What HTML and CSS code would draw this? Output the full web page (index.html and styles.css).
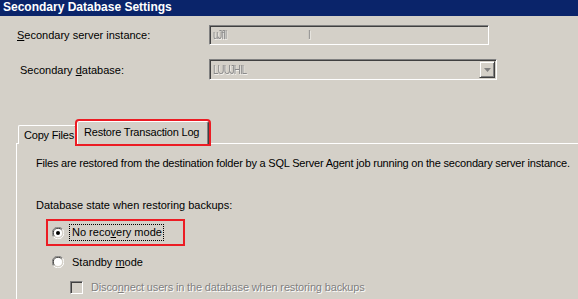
FILE: index.html
```html
<!DOCTYPE html>
<html>
<head>
<meta charset="utf-8">
<link rel="stylesheet" href="styles.css">
</head>
<body>
<div class="title">Secondary Database Settings</div>
<div class="form">
  <div class="field field-first">
    <div class="label label-1"><u>S</u>econdary server instance:</div>
    <div class="textbox box-1"><span class="redacted">uJflI</span><span class="redacted gap">I</span></div>
  </div>
  <div class="field field-second">
    <div class="label label-2">Secondary <u>d</u>atabase:</div>
    <div class="textbox box-2">
      <span class="redacted">LUUJHIL</span>
      <span class="drop">
        <svg width="7" height="4" viewBox="0 0 7 4"><path d="M0 0h7L3.5 4z" fill="#808080"/></svg>
      </span>
    </div>
  </div>
</div>
<div class="tabs">
  <div class="tab">Copy Files</div>
  <div class="tab tab-active">Restore Transaction Log</div>
</div>
<div class="panel">
  <div class="desc">Files are restored from the destination folder by a SQL Server Agent job running on the secondary server instance.</div>
  <div class="group-label">Database state when restoring backups:</div>
  <div class="highlight">
    <div class="option">
      <svg class="radio" width="12" height="12" viewBox="0 0 12 12">
        <path d="M10.5 2.2A5.5 5.5 0 0 0 1.5 9.8" fill="none" stroke="#808080" stroke-width="1"/>
        <path d="M9.6 2.9A4.5 4.5 0 0 0 2.4 9.1" fill="none" stroke="#404040" stroke-width="1"/>
        <circle cx="6" cy="6" r="4" fill="#fff"/>
        <path d="M1.5 9.8A5.5 5.5 0 0 0 10.5 2.2" fill="none" stroke="#fff" stroke-width="1"/>
        <circle cx="6" cy="6" r="2" fill="#000"/>
      </svg>
      <span class="focus">No reco<u>v</u>ery mode</span>
    </div>
  </div>
  <div class="option option-standby">
    <svg class="radio" width="12" height="12" viewBox="0 0 12 12">
      <path d="M10.5 2.2A5.5 5.5 0 0 0 1.5 9.8" fill="none" stroke="#808080" stroke-width="1"/>
      <path d="M9.6 2.9A4.5 4.5 0 0 0 2.4 9.1" fill="none" stroke="#404040" stroke-width="1"/>
      <circle cx="6" cy="6" r="4" fill="#fff"/>
      <path d="M1.5 9.8A5.5 5.5 0 0 0 10.5 2.2" fill="none" stroke="#fff" stroke-width="1"/>
    </svg>
    <span class="opt-text">Standby <u>m</u>ode</span>
  </div>
  <div class="option option-check">
    <span class="checkbox"></span>
    <span class="disabled-text">Disco<u>n</u>nect users in the database when restoring backups</span>
  </div>
</div>
</body>
</html>
```
FILE: styles.css
```css
html, body {
  margin: 0;
  padding: 0;
}
body {
  width: 578px;
  height: 299px;
  overflow: hidden;
  background: #d4d0c8;
  font-family: "Liberation Sans", Arial, sans-serif;
  font-size: 11px;
  color: #000;
}
u { text-decoration: underline; text-underline-offset: 1px; }

.title {
  height: 16px;
  line-height: 15px;
  background: #0a246a;
  color: #fff;
  font-weight: bold;
  font-size: 12px;
  padding-left: 3px;
}

.form {
  padding-top: 9px;
}
.field {
  display: flex;
  align-items: center;
}
.field-first { height: 20px; }
.field-second { height: 21px; margin-top: 14px; }
.label { width: 192px; }
.label-1 { margin-left: 17px; }
.label-2 { margin-left: 20px; width: 189px; }

.textbox {
  box-sizing: border-box;
  height: 100%;
  border-style: solid;
  border-width: 1px;
  border-color: #808080 #fff #fff #808080;
  box-shadow: inset 1px 1px 0 #404040, inset -1px -1px 0 #d4d0c8;
  display: flex;
  align-items: center;
  padding-left: 3px;
  position: relative;
}
.box-1 { width: 280px; }
.box-2 { width: 288px; }
.redacted {
  color: #8a8a8a;
  font-size: 12px;
  letter-spacing: -1px;
  transform: scaleX(0.8);
  transform-origin: left center;
  text-shadow: 1px 1px 0 #f4f2ee;
}
.gap { margin-left: 78px; }
.drop {
  position: absolute;
  right: 1px;
  top: 1px;
  width: 16px;
  height: 17px;
  box-sizing: border-box;
  border-style: solid;
  border-width: 1px;
  border-color: #d4d0c8 #404040 #404040 #d4d0c8;
  box-shadow: inset 1px 1px 0 #fff, inset -1px -1px 0 #808080;
  display: flex;
  align-items: center;
  justify-content: center;
}

.tabs {
  margin-top: 41px;
  padding-left: 18px;
  display: flex;
  align-items: flex-end;
  height: 22px;
  position: relative;
  z-index: 1;
}
.tab {
  box-sizing: border-box;
  height: 19px;
  margin-bottom: -1px;
  border-top: 1px solid #fff;
  border-left: 1px solid #fff;
  border-right: 1px solid #404040;
  box-shadow: inset -1px 0 0 #808080;
  border-radius: 2px 2px 0 0;
  padding: 3px 0 0 5px;
  width: 59px;
  background: #d4d0c8;
  line-height: 13px;
  white-space: nowrap;
  letter-spacing: -0.2px;
}
.tab-active {
  width: 132px;
  height: 23px;
  padding: 4px 0 0 6px;
  outline: 2px solid #ec1c24;
  outline-offset: 0;
}

.panel {
  box-sizing: border-box;
  margin-left: 16px;
  border-left: 1px solid #fff;
  border-top: 1px solid #fff;
  padding: 13px 0 0 19px;
  height: 156px;
}
.desc {
  line-height: 13px;
  white-space: nowrap;
  letter-spacing: -0.2px;
}
.group-label { margin-top: 29px; line-height: 13px; }

.highlight {
  margin-top: 7px;
  margin-left: 10px;
  width: 131px;
  height: 23px;
  border: 2px solid #ec1c24;
  display: flex;
  align-items: center;
  padding-left: 4px;
}
.option {
  display: flex;
  align-items: center;
  white-space: nowrap;
}
.radio { flex: none; }
.focus {
  margin-left: 6px;
  padding: 1px 1px 1px 2px;
  outline: 1px dotted #000;
  outline-offset: 0;
  line-height: 13px;
}
.option-standby {
  margin-left: 16px;
  margin-top: 9px;
  height: 14px;
}
.opt-text { margin-left: 8px; }
.option-check {
  margin-left: 34px;
  margin-top: 11px;
  height: 14px;
}
.checkbox {
  box-sizing: border-box;
  width: 13px;
  height: 13px;
  border-style: solid;
  border-width: 1px;
  border-color: #808080 #fff #fff #808080;
  box-shadow: inset 1px 1px 0 #404040, inset -1px -1px 0 #d4d0c8;
  background: #d4d0c8;
  flex: none;
}
.disabled-text {
  margin-left: 8px;
  color: #808080;
  text-shadow: 1px 1px 0 #fff;
  letter-spacing: -0.15px;
}
```
